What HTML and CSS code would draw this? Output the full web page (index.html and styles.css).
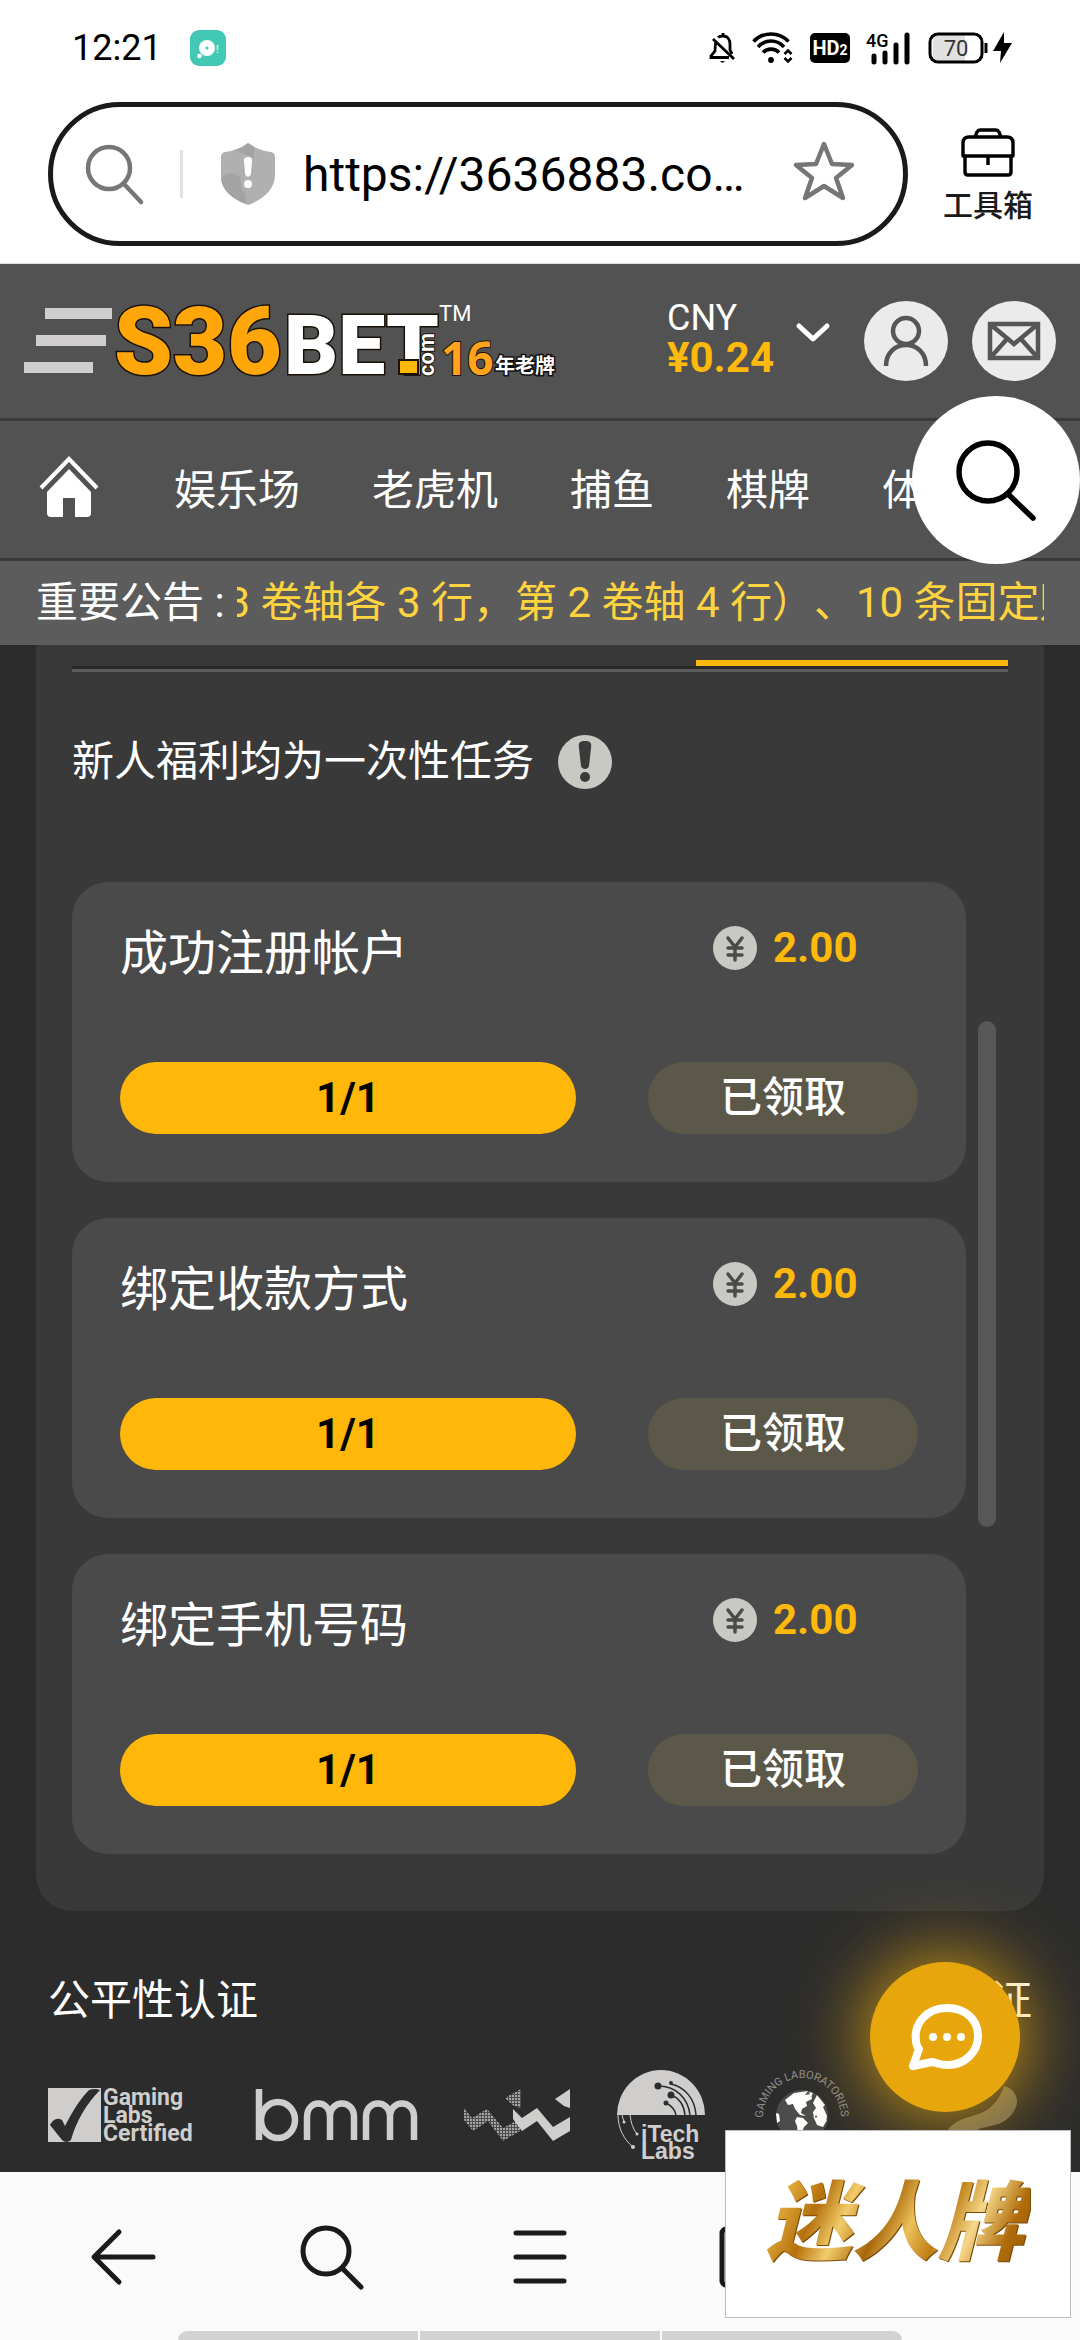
FILE: index.html
```html
<!DOCTYPE html>
<html lang="zh-CN">
    <head>
        <meta charset="utf-8">
        <meta name="viewport" content="width=device-width, initial-scale=1">
        <title>S36BET</title>
        <link rel="stylesheet" href="styles.css">
    </head>
    <body>

        <!-- Status bar -->
        <div class="status-bar">
            <span class="clock">12:21</span>
            <svg class="app-badge" viewBox="0 0 36 36" width="36" height="36">
                <rect width="36" height="36" rx="9" fill="#43c8b5"/>
                <circle cx="17" cy="18" r="8" fill="#fff"/>
                <circle cx="17" cy="18" r="1.5" fill="#43c8b5"/>
                <circle cx="9.500" cy="26" r="2.300" fill="#fff"/>
                <path d="M27.500 15v5M27.500 21.500v1.500" stroke="#c4efe8" stroke-width="1.600"/>
            </svg>
            <div class="status-icons">
                <svg viewBox="0 0 26 32" width="26" height="32" fill="none" stroke="#000" stroke-width="2.800">
                    <path d="M8 5.500C9 4.500 11 4 13 4c5 0 7 4 7 8v6l2 4M6 10c-1 3-1 6-1 9l-4 5v1.500h18M13 1v3"/>
                    <path d="M3 7l21 20"/>
                    <path d="M10 29h5l-2.500 2z" fill="#000" stroke="none"/>
                </svg>
                <svg viewBox="0 0 42 32" width="42" height="32" fill="none" stroke="#000" stroke-width="3.600">
                    <path d="M1.500 9.500C11-.500 27-.500 36.500 9.500M6 15c7-8 19-8 26 0M11 20.500c4-4.500 12-4.500 16 0"/>
                    <circle cx="19" cy="28" r="2.900" fill="#000" stroke="none"/>
                    <path d="M32.500 22l3.500-3.500 3.500 3.500M32.500 26l3.500 3.500 3.500-3.500" stroke-width="2.600"/>
                </svg>
                <span class="hd">HD<small>2</small></span>
                <svg viewBox="0 0 46 32" width="46" height="32">
                    <text x="0" y="15" class="net">4G</text>
                    <path d="M8 24v6M19 21v9M30 13v17M41 3v27" stroke="#000" stroke-width="5" stroke-linecap="round"/>
                </svg>
                <svg viewBox="0 0 86 32" width="86" height="32">
                    <rect x="5" y="3" width="32" height="26" fill="#e0e0e0"/>
                    <rect x="2" y="2" width="52" height="28" rx="8" fill="none" stroke="#000" stroke-width="3"/>
                    <path d="M58 11v10" stroke="#000" stroke-width="3"/>
                    <path d="M76 0L65 19h8l-1 12 12-20h-8z"/>
                    <text x="28" y="24" text-anchor="middle" class="level">70</text>
                </svg>
            </div>
        </div>

        <!-- Address bar -->
        <div class="address-bar">
            <form class="url-box">
                <svg class="find" viewBox="0 0 60 60" width="60" height="60" fill="none" stroke="#767676" stroke-width="4.500" stroke-linecap="round">
                    <circle cx="24" cy="24" r="21"/>
                    <path d="M39 40l17 18"/>
                </svg>
                <span class="split"></span>
                <svg viewBox="0 0 54 62" width="54" height="62">
                    <path d="M27 0c7 5 15 8 23 9q4 1 4 5v18c0 14-11 24-27 30C11 56 0 46 0 32V14q0-4 4-5c8-1 16-4 23-9z" fill="#b0b0b0"/>
                    <path d="M27 0c-5 4-9 6-13 7l19 8V4zM0 36q3-6 12-6 8 2 8 10 0 7 5 12v9C11 56 1 47 0 36z" fill="#a3a3a3"/>
                    <path d="M27 14c3 0 4 1 4 4l-1 12c0 5-6 5-6 0l-1-12c0-3 1-4 4-4z" fill="#fff"/>
                    <circle cx="27" cy="41" r="4" fill="#fff"/>
                </svg>
                <input class="url" type="text" aria-label="网址" value="https://3636883.co…">
                <button class="plain" type="button" aria-label="收藏">
                    <svg viewBox="0 3 62 60" width="62" height="60" fill="none" stroke="#767676" stroke-width="4.500" stroke-linejoin="round">
                        <path d="M31 3l8 20 20 1-16 13 7 20-19-12-19 12 7-20L3 24l20-1z"/>
                    </svg>
                </button>
            </form>
            <button class="toolbox" type="button">
                <svg viewBox="0 0 54 48" width="54" height="48" fill="none" stroke="#000" stroke-width="3.400" stroke-linejoin="round">
                    <path d="M14 9l2-5q1-2 3-2h16q2 0 3 2l2 5"/>
                    <path d="M2 28V15q0-6 6-6h38q6 0 6 6v13z"/>
                    <path d="M4 28v16q0 3 3 3h40q3 0 3-3V28M27 28v9"/>
                </svg>
                工具箱
            </button>
        </div>

        <!-- Site -->
        <div class="site">
            <header class="header">
                <button class="plain" type="button" aria-label="菜单">
                    <svg viewBox="0 0 88 66" width="88" height="66" fill="#d0cece">
                        <path d="M21 0h67v11H21zM12 27h70v11H12zM0 54h69v11H0z"/>
                    </svg>
                </button>
                <a class="logo" href="#" aria-label="S36BET">
                    <svg viewBox="0 0 446 76" width="446" height="76">
                        <text class="mark" x="0" y="71" fill="#ffa70a">S36</text>
                        <text class="mark bet" x="170" y="71" fill="#fff">BET</text>
                        <rect x="285" y="57" width="19" height="14" fill="#ffb90c" stroke="#1a1208" stroke-width="2"/>
                        <text class="com" transform="translate(320 73) rotate(-90)">com</text>
                        <text class="tm" x="325" y="18">TM</text>
                        <text class="age" x="327" y="72">16</text>
                        <text class="old" x="381" y="70">年老牌</text>
                    </svg>
                </a>
                <button class="balance" type="button">
                    <span class="money">
                        <span class="currency">CNY</span>
                        <b>¥0.24</b>
                    </span>
                    <svg viewBox="0 0 34 20" width="34" height="20" fill="none" stroke="#fff" stroke-width="5" stroke-linecap="round" stroke-linejoin="round">
                        <path d="M3 3l14 13L31 3"/>
                    </svg>
                </button>
                <button class="round" type="button" aria-label="会员">
                    <svg viewBox="0 0 84 80" width="84" height="80">
                        <ellipse cx="42" cy="40" rx="42" ry="40" fill="#ebebeb"/>
                        <g fill="none" stroke="#565656" stroke-width="4.500">
                            <circle cx="42" cy="30" r="13"/>
                            <path d="M22 65c0-13 9-21 20-21s20 8 20 21"/>
                        </g>
                    </svg>
                </button>
                <button class="round" type="button" aria-label="信箱">
                    <svg viewBox="0 0 84 80" width="84" height="80">
                        <ellipse cx="42" cy="40" rx="42" ry="40" fill="#ebebeb"/>
                        <path d="M18 23h48v34H18zM18 23l24 20 24-20M18 57l17-19M66 57L49 38" fill="none" stroke="#565656" stroke-width="4.500"/>
                    </svg>
                </button>
            </header>

            <nav class="nav">
                <a class="home" href="#" aria-label="首页">
                    <svg viewBox="0 0 60 60" width="66" height="60" fill="#fff">
                        <path d="M2 31L30 2l28 29" fill="none" stroke="#fff" stroke-width="4"/>
                        <path d="M30 12l22 23v21q0 4-4 4H36V41H24v19H12q-4 0-4-4V35z"/>
                    </svg>
                </a>
                <a href="#">娱乐场</a>
                <a href="#">老虎机</a>
                <a href="#">捕鱼</a>
                <a href="#">棋牌</a>
                <a href="#">体育</a>
            </nav>

            <div class="notice">
                <span class="notice-title">重要公告 :</span>
                <div class="marquee"><span>3 卷轴各 3 行，第 2 卷轴 4 行）、10 条固定赔付线</span></div>
            </div>

            <main class="panel">
                <div class="tab-line"><span class="tab-active"></span></div>
                <div class="intro">
                    <span>新人福利均为一次性任务</span>
                    <button class="plain" type="button" aria-label="说明">
                        <svg viewBox="0 0 54 54" width="54" height="54">
                            <circle cx="27" cy="27" r="27" fill="#c8c9c3"/>
                            <path d="M27 6c5 0 7 2 6 7l-2 18c-1 4-7 4-8 0l-2-18c-1-5 1-7 6-7z" fill="#3a3a3a"/>
                            <circle cx="27" cy="42" r="5" fill="#3a3a3a"/>
                        </svg>
                    </button>
                </div>
                <div class="scroller">
                    <div class="tasks">
                        <section class="task">
                            <h2>成功注册帐户</h2>
                            <p class="prize">
                                <svg viewBox="0 0 44 44" width="44" height="44">
                                    <circle cx="22" cy="22" r="22" fill="#c8c9c3"/>
                                    <path d="M15 12l7 9 7-9M22 21v13M15 22h14M15 29h14" fill="none" stroke="#4b4b4b" stroke-width="3.500" stroke-linecap="round"/>
                                </svg>
                                2.00
                            </p>
                            <div class="progress"><div class="bar" style="width: 100%">1/1</div></div>
                            <button class="claim" type="button">已领取</button>
                        </section>
                        <section class="task">
                            <h2>绑定收款方式</h2>
                            <p class="prize">
                                <svg viewBox="0 0 44 44" width="44" height="44">
                                    <circle cx="22" cy="22" r="22" fill="#c8c9c3"/>
                                    <path d="M15 12l7 9 7-9M22 21v13M15 22h14M15 29h14" fill="none" stroke="#4b4b4b" stroke-width="3.500" stroke-linecap="round"/>
                                </svg>
                                2.00
                            </p>
                            <div class="progress"><div class="bar" style="width: 100%">1/1</div></div>
                            <button class="claim" type="button">已领取</button>
                        </section>
                        <section class="task">
                            <h2>绑定手机号码</h2>
                            <p class="prize">
                                <svg viewBox="0 0 44 44" width="44" height="44">
                                    <circle cx="22" cy="22" r="22" fill="#c8c9c3"/>
                                    <path d="M15 12l7 9 7-9M22 21v13M15 22h14M15 29h14" fill="none" stroke="#4b4b4b" stroke-width="3.500" stroke-linecap="round"/>
                                </svg>
                                2.00
                            </p>
                            <div class="progress"><div class="bar" style="width: 100%">1/1</div></div>
                            <button class="claim" type="button">已领取</button>
                        </section>
                    </div>
                    <div class="track"><div class="thumb"></div></div>
                </div>
            </main>

            <footer class="footer">
                <div class="footer-titles">
                    <span>公平性认证</span>
                    <span>认证</span>
                </div>
                <div class="logos">
                    <svg viewBox="0 0 160 54" width="160" height="54">
                        <rect width="53" height="54" fill="#cfcecc"/>
                        <path d="M2 37q5-9 12-5l3 6C25 22 33 10 41 2q6-2 11 0C38 16 28 34 23 52q-5 4-9 0z" fill="#2d2d2d"/>
                        <g class="glc">
                            <text x="55" y="17">Gaming</text>
                            <text x="55" y="35">Labs</text>
                            <text x="55" y="53">Certified</text>
                        </g>
                    </svg>
                    <svg viewBox="0 0 162 52" width="162" height="52" fill="none" stroke="#cfcecc" stroke-width="6.500">
                        <path d="M4 0v51"/>
                        <ellipse cx="23" cy="31" rx="17" ry="18"/>
                        <path d="M52 51V28c0-18 23-18 23 0v23M75 28c0-18 24-18 24 0v23"/>
                        <path d="M111 51V28c0-18 24-18 24 0v23M135 28c0-18 24-18 24 0v23"/>
                    </svg>
                    <svg viewBox="0 0 106 52" width="106" height="52">
                        <defs>
                            <pattern id="dots" width="3" height="3" patternUnits="userSpaceOnUse">
                                <rect width="3" height="3" fill="#4d4d4d"/>
                                <rect width="2" height="2" fill="#a5a5a3"/>
                            </pattern>
                        </defs>
                        <path d="M0 19l8 10 15-9 16 19 17-9v12l-17 10-15-20-15 10-9-11zM57 0v19l-7-2-9-8z" fill="url(#dots)"/>
                        <path d="M49 20l9 9 15-10 16 19 17-10v14L89 52 73 32 58 42l-9-12zM106 0v19l-6-2-9-7z" fill="#cfcecc"/>
                    </svg>
                    <svg viewBox="0 0 88 90" width="88" height="90">
                        <path d="M0 45a44 45 0 0 1 88 0z" fill="#cfcecc"/>
                        <g fill="none" stroke="#2d2d2d" stroke-width="1.500">
                            <path d="M41 16c18 0 30 12 32 29M54 14c14 3 24 15 25 31M54 25c8 3 13 10 14 20M49 33c6 3 9 7 10 12"/>
                        </g>
                        <g fill="#2d2d2d">
                            <circle cx="41" cy="16" r="3.500"/><circle cx="54" cy="25" r="3.500"/>
                            <circle cx="54" cy="13" r="2"/><circle cx="49" cy="33" r="2.500"/>
                        </g>
                        <g fill="none" stroke="#cfcecc">
                            <path d="M1 45c0 13 6 25 15 32M5 45l2 7M13 45c1 8 3 14 7 19"/>
                        </g>
                        <g fill="#cfcecc">
                            <circle cx="16" cy="77" r="2"/><circle cx="7" cy="52" r="1.500"/><circle cx="20" cy="64" r="1.500"/>
                        </g>
                        <text class="itech" x="24" y="72">iTech</text>
                        <text class="itech" x="24" y="89">Labs</text>
                    </svg>
                    <svg viewBox="0 0 100 96" width="100" height="96">
                        <defs><path id="ring" d="M11 51a39 40 0 1 1 78 0"/></defs>
                        <text class="ring-text"><textPath href="#ring">GAMING LABORATORIES</textPath></text>
                        <circle cx="50" cy="49" r="26" fill="#4c4c4c"/>
                        <g fill="#fff">
                            <path d="M33 33l9-7 14-2-3 4 6-1 1 5-6 3 1 4-5 3-1 4 5 3-6-1-5-6-2-5-5 1z"/>
                            <path d="M24 46l3 1 1 7-3 2zM45 50l6 1 5 5-4 4-3 8-3-1-1-8-2-5z"/>
                            <path d="M57 25l4 1-2 4zM65 28l8 10-2 2 4 9-1 6-6-1-4-6-2 4-1-7 3-4-3-5zM62 51l8-2 5 4-4 7-6-2z"/>
                        </g>
                    </svg>
                    <svg class="last" viewBox="0 0 90 70" width="90" height="70">
                        <path d="M62 6a16 16 0 0 1 10 25c-9 14-20 14-32 17-8 2-11 8-13 18H0c2-18 13-25 27-29 14-4 27-8 35-31z" fill="#6f6a5a"/>
                    </svg>
                </div>
            </footer>

            <button class="float-search" type="button" aria-label="搜索">
                <svg viewBox="0 0 84 84" width="84" height="84" fill="none" stroke="#000" stroke-width="5.500" stroke-linecap="round">
                    <circle cx="34" cy="34" r="29"/>
                    <path d="M55 57l24 23"/>
                </svg>
            </button>
            <button class="chat" type="button" aria-label="客服">
                <svg viewBox="0 0 74 66" width="74" height="66">
                    <path d="M39 4c19 0 31 12 31 28S57 61 39 61c-6 0-10-2-15-3L5 62l6-17-2-3C3 20 19 4 39 4z" fill="none" stroke="#fff" stroke-width="8" stroke-linejoin="round"/>
                    <g fill="#fff"><circle cx="25" cy="33" r="4"/><circle cx="39" cy="33" r="4"/><circle cx="53" cy="33" r="4"/></g>
                </svg>
            </button>
        </div>

        <!-- Browser toolbar -->
        <div class="toolbar">
            <div class="tools">
                <button class="plain" type="button" aria-label="后退">
                    <svg viewBox="0 0 64 64" width="64" height="64"><path d="M61 32H3M27 7L2 32l25 25"/></svg>
                </button>
                <button class="plain" type="button" aria-label="搜索">
                    <svg viewBox="0 0 64 64" width="64" height="64"><circle cx="26" cy="26" r="23"/><path d="M43 44l18 18"/></svg>
                </button>
                <button class="plain" type="button" aria-label="菜单">
                    <svg viewBox="0 0 64 64" width="64" height="64"><path d="M8 8h48M8 32h48M8 56h48"/></svg>
                </button>
                <button class="plain" type="button" aria-label="窗口">
                    <svg viewBox="0 0 64 64" width="64" height="64"><rect x="6" y="4" width="52" height="56" rx="4"/></svg>
                </button>
                <button class="plain" type="button" aria-label="主页">
                    <svg viewBox="0 0 64 64" width="64" height="64"><path d="M8 28L32 6l24 22v30H8z"/></svg>
                </button>
            </div>
            <div class="gesture"><span></span><span></span><span></span></div>
            <a class="promo" href="#"><span>迷人牌</span></a>
        </div>

    </body>
</html>
```
FILE: styles.css
```css
* {
  box-sizing: border-box;
}

body {
  margin: 0;
  min-height: 100vh;
  display: flex;
  flex-direction: column;
  overflow-x: hidden;
  background-color: #fff;
  color: #fff;
  font-family: Roboto, "Noto Sans CJK SC", sans-serif;
  font-size: 42px;
  line-height: 60px;
}

svg {
  display: block;
  flex-shrink: 0;
  overflow: visible;
}

a {
  color: inherit;
  text-decoration: none;
}

button {
  font: inherit;
  color: inherit;
  cursor: pointer;
}

.plain,
.round {
  padding: 0;
  border: none;
  background: none;
}

/* Status bar */
.status-bar {
  height: 96px;
  padding: 0 66px 0 72px;
  display: flex;
  align-items: center;
  color: #000;
}

.clock {
  font-size: 36px;
}

.app-badge {
  margin-left: 28px;
}

.status-icons {
  margin-left: auto;
  display: flex;
  align-items: center;
  gap: 16px;
}

.hd {
  width: 40px;
  height: 30px;
  border-radius: 5px;
  background-color: #000;
  color: #fff;
  font-size: 20px;
  font-weight: 700;
  line-height: 30px;
  text-align: center;
}

.hd small {
  font-size: 14px;
}

.net {
  font-size: 18px;
  font-weight: 500;
}

.level {
  font-size: 22px;
  fill: #333;
}

/* Address bar */
.address-bar {
  padding: 6px 40px 17px 48px;
  display: flex;
  align-items: center;
  gap: 28px;
  border-bottom: 1px solid #dcdcdc;
}

.url-box {
  flex: 1;
  min-width: 0;
  height: 144px;
  padding: 0 48px 0 32px;
  display: flex;
  align-items: center;
  border: 5px solid #1a1a1a;
  border-radius: 72px;
}

.split {
  width: 3px;
  height: 48px;
  margin: 0 38px 0 35px;
  background-color: #e0e0e0;
}

.url {
  flex: 1;
  min-width: 0;
  margin: 0 24px 0 28px;
  padding: 0;
  border: none;
  background: none;
  color: #000;
  font-family: Roboto, sans-serif;
  font-size: 48px;
}

.toolbox {
  width: 104px;
  padding: 8px 0 0;
  display: flex;
  flex-direction: column;
  align-items: center;
  gap: 8px;
  border: none;
  background: none;
  color: #1a1a1a;
  font-size: 30px;
  font-weight: 500;
  line-height: 44px;
}

/* Site */
.site {
  position: relative;
  flex: 1;
  display: flex;
  flex-direction: column;
  background-color: #2c2c2c;
}

.header {
  height: 157px;
  padding: 0 24px;
  display: flex;
  align-items: center;
  background-color: #525252;
  border-bottom: 3px solid #3a3a3a;
}

.balance {
  margin-left: auto;
  padding: 0;
  display: flex;
  align-items: center;
  gap: 22px;
  border: none;
  background: none;
  text-align: left;
}

.money {
  padding-bottom: 6px;
  display: flex;
  flex-direction: column;
  line-height: 40px;
}

.money b {
  color: #ffb80c;
}

.currency {
  font-size: 36px;
}

.balance svg {
  margin-bottom: 16px;
}

.balance + .round {
  margin-left: 34px;
}

.round + .round {
  margin-left: 24px;
}

.logo {
  margin-left: 2px;
}

.mark {
  font-family: Roboto, sans-serif;
  font-size: 94px;
  font-weight: 900;
  stroke: #1a1208;
  stroke-width: 3px;
  paint-order: stroke;
}

.bet {
  font-size: 84px;
}

.com {
  fill: #fff;
  font-size: 22px;
  font-weight: 700;
  stroke: #1a1208;
  stroke-width: 2px;
  paint-order: stroke;
}

.tm {
  fill: #fff;
  font-size: 22px;
}

.age {
  fill: #ffa41c;
  font-family: "Open Sans", sans-serif;
  font-size: 46px;
  font-weight: 700;
  stroke: #1a1208;
  stroke-width: 2px;
  paint-order: stroke;
}

.old {
  fill: #fff;
  font-size: 20px;
  font-weight: 700;
  stroke: #111;
  stroke-width: 3px;
  paint-order: stroke;
}

.nav {
  height: 140px;
  padding: 3px 36px 0;
  display: flex;
  align-items: center;
  gap: 72px;
  overflow: hidden;
  white-space: nowrap;
  background-color: #525252;
  border-bottom: 3px solid #3a3a3a;
}

.home {
  padding-bottom: 8px;
}

.notice {
  height: 84px;
  padding: 0 36px;
  display: flex;
  align-items: center;
  gap: 12px;
  background-color: #5c5c5c;
}

.notice-title {
  flex-shrink: 0;
}

.marquee {
  flex: 1;
  min-width: 0;
  overflow: hidden;
  white-space: nowrap;
  color: #fdd33f;
  text-spacing-trim: space-all;
}

.marquee span {
  display: inline-block;
  margin-left: -10px;
}

.panel {
  margin: 0 36px;
  padding: 0 36px 57px;
  background-color: #393939;
  border-radius: 0 0 36px 36px;
}

.tab-line {
  height: 27px;
  display: flex;
  align-items: flex-end;
  border-bottom: 3px solid #5c5c5c;
  box-shadow: inset 0 -3px #282828;
}

.tab-active {
  width: 33.333%;
  height: 6px;
  margin: 0 0 3px auto;
  background-color: #ffb80c;
}

.intro {
  height: 210px;
  padding-bottom: 30px;
  display: flex;
  align-items: center;
  gap: 24px;
}

.scroller {
  display: flex;
  gap: 12px;
}

.tasks {
  flex: 1;
  display: flex;
  flex-direction: column;
  gap: 36px;
}

.task {
  height: 300px;
  padding: 42px 48px 48px;
  display: grid;
  grid-template-columns: minmax(0, 456fr) minmax(0, 270fr);
  column-gap: 72px;
  align-content: space-between;
  background-color: #4a4a4a;
  border-radius: 36px;
}

.task h2 {
  margin: 0;
  font-size: 48px;
  font-weight: 400;
  line-height: 60px;
}

.prize {
  margin: 0;
  padding-left: 65px;
  display: flex;
  align-items: center;
  gap: 16px;
  color: #ffb80c;
  font-weight: 700;
  line-height: 48px;
  height: 48px;
}

.bar,
.claim {
  height: 72px;
  border-radius: 36px;
  line-height: 72px;
  text-align: center;
}

.bar {
  background-color: #ffb80a;
  color: #000;
  font-weight: 700;
}

.claim {
  padding: 0;
  border: none;
  background-color: #5c5849;
  color: #fff;
  font-weight: 500;
}

.track {
  width: 18px;
  margin-right: 12px;
  padding-top: 139px;
}

.thumb {
  height: 506px;
  border-radius: 9px;
  background-color: #575757;
}

.footer {
  flex: 1;
  padding: 60px 48px 0;
}

.footer-titles {
  display: flex;
  justify-content: space-between;
}

.logos {
  height: 96px;
  margin-top: 36px;
  display: flex;
  align-items: center;
  gap: 47px;
}

.last {
  margin-left: auto;
}

.glc {
  fill: #cfcecc;
  font-size: 23px;
  font-weight: 700;
}

.itech {
  fill: #cfcecc;
  font-family: "Liberation Sans", sans-serif;
  font-size: 23px;
  font-weight: 700;
}

.ring-text {
  fill: #8e8e8e;
  font-size: 11px;
}

.float-search {
  position: absolute;
  top: 132px;
  right: 0;
  width: 168px;
  height: 168px;
  padding: 0;
  display: flex;
  align-items: center;
  justify-content: center;
  border: none;
  border-radius: 50%;
  background-color: #fff;
}

.chat {
  position: absolute;
  right: 60px;
  bottom: 60px;
  width: 150px;
  height: 150px;
  padding: 0;
  display: flex;
  align-items: center;
  justify-content: center;
  border: none;
  border-radius: 50%;
  background-color: #e8a60d;
  box-shadow: 0 0 72px 6px rgba(255, 184, 12, 0.75);
}

/* Browser toolbar */
.toolbar {
  position: relative;
  height: 168px;
  display: flex;
  flex-direction: column;
  justify-content: space-between;
  background-color: #fafafa;
}

.tools {
  padding: 53px 20px 0;
  display: grid;
  grid-template-columns: repeat(5, 1fr);
  justify-items: center;
}

.tools svg {
  fill: none;
  stroke: #1a1a1a;
  stroke-width: 5px;
  stroke-linecap: round;
  stroke-linejoin: round;
}

.gesture {
  margin: 0 auto;
  width: 67%;
  height: 9px;
  display: grid;
  grid-template-columns: repeat(3, 1fr);
  gap: 2px;
  overflow: hidden;
  border-radius: 9px 9px 0 0;
}

.gesture span {
  background-color: #d2d2d2;
}

.promo {
  position: absolute;
  right: 9px;
  bottom: 22px;
  width: 346px;
  height: 188px;
  display: flex;
  align-items: center;
  justify-content: center;
  border: 1px solid #bdbdbd;
  background-color: #fff;
  color: #b87410;
  font-size: 86px;
  font-style: italic;
  font-weight: 900;
  line-height: 120px;
}

.promo span {
  padding-right: 6px;
  background: linear-gradient(115deg, #a5670a, #e2ac3c 10%, #b4700c 22%, #f3cc6a 32%, #a8660a 44%, #ecc05a 54%, #c07f15 64%, #f5d88a 74%, #b06c0a 86%, #8f5605);
  -webkit-background-clip: text;
  background-clip: text;
  color: transparent;
  filter: drop-shadow(1px 1px 0 #7a4a06);
}
```
